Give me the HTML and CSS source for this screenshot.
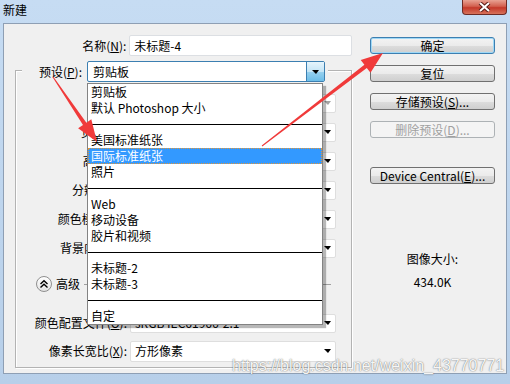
FILE: index.html
```html
<!DOCTYPE html>
<html lang="zh-CN">
<head>
    <meta charset="UTF-8">
    <title>新建</title>
    <link rel="stylesheet" href="styles.css">
</head>
<body>
<div class="win">
    <div class="titlebar">
        <span class="title">新建</span>
        <span class="close">
            <svg width="13" height="10" viewBox="0 0 13 10">
                <path d="M2 1 L11 9 M11 1 L2 9" stroke="#5a1c17" stroke-width="4"/>
                <path d="M2 1 L11 9 M11 1 L2 9" stroke="#fff" stroke-width="2"/>
            </svg>
        </span>
    </div>

    <div class="client">
        <!-- 左侧：表单 -->
        <div class="left">
            <div class="name-row">
                <span class="lbl name-lbl">名称(<u>N</u>):</span>
                <span class="text-box">未标题-4</span>
            </div>

            <div class="group">
                <div class="preset-row">
                    <span class="preset-lbl">预设(<u>P</u>):</span>
                    <div class="combo">
                        <span class="combo-val">剪贴板</span>
                        <span class="drop-btn"><i class="tri"></i></span>

                        <ul class="menu">
                            <li>剪贴板</li>
                            <li>默认 Photoshop 大小</li>
                            <li class="sep"></li>
                            <li>美国标准纸张</li>
                            <li class="hot">国际标准纸张</li>
                            <li>照片</li>
                            <li class="sep"></li>
                            <li>Web</li>
                            <li>移动设备</li>
                            <li>胶片和视频</li>
                            <li class="sep"></li>
                            <li>未标题-2</li>
                            <li>未标题-3</li>
                            <li class="sep"></li>
                            <li>自定</li>
                        </ul>
                    </div>
                </div>

                <div class="field-row first">
                    <span class="lbl off">大小(<u>I</u>):</span>
                    <span class="sel off full"><span>A4</span><i class="tri"></i></span>
                </div>
                <div class="field-row">
                    <span class="lbl">宽度(<u>W</u>):</span>
                    <span class="inp">210</span>
                    <span class="sel unit"><span>毫米</span><i class="tri"></i></span>
                </div>
                <div class="field-row">
                    <span class="lbl">高度(<u>H</u>):</span>
                    <span class="inp">297</span>
                    <span class="sel unit"><span>毫米</span><i class="tri"></i></span>
                </div>
                <div class="field-row">
                    <span class="lbl">分辨率(<u>R</u>):</span>
                    <span class="inp">300</span>
                    <span class="sel unit"><span>像素/英寸</span><i class="tri"></i></span>
                </div>
                <div class="field-row">
                    <span class="lbl">颜色模式(<u>M</u>):</span>
                    <span class="sel mode"><span>RGB 颜色</span><i class="tri"></i></span>
                    <span class="sel unit"><span>8 位</span><i class="tri"></i></span>
                </div>
                <div class="field-row">
                    <span class="lbl">背景内容(<u>C</u>):</span>
                    <span class="sel full"><span>白色</span><i class="tri"></i></span>
                </div>

                <div class="adv-row">
                    <span class="adv-btn">
                        <svg width="10" height="10" viewBox="0 0 10 10">
                            <path d="M1.5 5 L5 1.8 L8.5 5 M1.5 8.5 L5 5.3 L8.5 8.5" fill="none" stroke="#000" stroke-width="1.4"/>
                        </svg>
                    </span>
                    <span class="adv-text">高级</span>
                    <span class="adv-line"></span>
                </div>

                <div class="field-row profile">
                    <span class="lbl">颜色配置文件(<u>O</u>):</span>
                    <span class="sel full"><span>sRGB IEC61966-2.1</span><i class="tri"></i></span>
                </div>
                <div class="field-row aspect">
                    <span class="lbl">像素长宽比(<u>X</u>):</span>
                    <span class="sel full tall"><span>方形像素</span><i class="tri"></i></span>
                </div>
            </div>
        </div>

        <!-- 右侧：按钮 -->
        <div class="right">
            <span class="btn default">确定</span>
            <span class="btn">复位</span>
            <span class="btn">存储预设(<u>S</u>)...</span>
            <span class="btn off">删除预设(<u>D</u>)...</span>
            <span class="btn device">Device Central(<u>E</u>)...</span>

            <div class="size-info">
                <p>图像大小:</p>
                <p class="size-num">434.0K</p>
            </div>
        </div>
    </div>

    <svg class="arrows" width="510" height="384" viewBox="0 0 510 384">
        <polygon fill="#f03a3a" points="53.4,76.7 86.4,122.7 91.3,119.3 97,142 78.1,128.3 83.0,124.9 52.6,77.3"/>
        <polygon fill="#f03a3a" points="262.3,146.4 366.8,68.0 370.5,72.7 383,53 360.7,60.1 364.4,64.8 261.7,145.6"/>
    </svg>

    <div class="watermark">https://blog.csdn.net/weixin_43770771</div>
</div>
</body>
</html>
```

FILE: styles.css
```css
* {
    margin: 0;
    padding: 0;
    box-sizing: border-box;
}

body {
    width: 510px;
    height: 384px;
    overflow: hidden;
    font: 12px/16px "Noto Sans CJK SC", "Liberation Sans", sans-serif;
    color: #000;
    background: #bcd3eb;
}

u {
    text-decoration: underline;
}

ul {
    list-style: none;
}

.win {
    position: relative;
    width: 510px;
    height: 384px;
    display: flex;
    flex-direction: column;
    background: linear-gradient(#c6dcf3, #b7cfe9);
}

/* 标题栏 */
.titlebar {
    height: 23px;
    display: flex;
    justify-content: space-between;
    align-items: flex-start;
    padding-left: 3px;
}

.title {
    line-height: 20px;
}

.close {
    width: 45px;
    height: 15px;
    margin-right: 3px;
    display: flex;
    align-items: center;
    justify-content: center;
    border: 1px solid #6d2b25;
    border-top: 0;
    border-radius: 0 0 4px 4px;
    background: linear-gradient(#e8a293, #d2604f 45%, #c4382a 55%, #d7735b);
}

/* 客户区 */
.client {
    height: 351px;
    margin: 0 3px;
    display: flex;
    border: 1px solid #8e9fb4;
    background: #f0f0f0;
}

.left {
    width: 348px;
}

.lbl {
    width: 111px;
    margin-right: 3px;
    text-align: right;
    white-space: nowrap;
}

.off {
    color: #8d8d8d;
}

.name-row {
    display: flex;
    align-items: center;
    height: 21px;
    margin-top: 11px;
}

.name-lbl {
    width: 123px;
}

.text-box {
    width: 224px;
    height: 21px;
    padding-left: 4px;
    line-height: 19px;
    border: 1px solid #dcdfe3;
    border-radius: 2px;
    background: #fff;
}

/* 分组框 */
.group {
    width: 337px;
    height: 298px;
    margin: 14px 0 0 11px;
    border: 1px solid #b3b3b3;
    box-shadow: 1px 1px 0 #fff, inset 1px 1px 0 #fff;
}

.preset-row {
    display: flex;
    align-items: center;
    width: 306px;
    height: 21px;
    margin: -10px 0 0 6px;
    background: #f0f0f0;
}

.preset-lbl {
    width: 60px;
    margin-right: 5px;
    text-align: right;
}

.combo {
    position: relative;
    display: flex;
    align-items: center;
    width: 238px;
    height: 21px;
    padding-left: 5px;
    border: 1px solid #3c7fb1;
    border-radius: 2px;
    background: #fff;
}

.combo-val {
    flex: 1;
}

.drop-btn {
    width: 18px;
    height: 19px;
    display: flex;
    align-items: center;
    justify-content: center;
    border-left: 1px solid #3c7fb1;
    background: linear-gradient(#e5f4fc, #c4e5f6 50%, #98d1ef 51%, #6cbde8);
}

.tri {
    width: 0;
    height: 0;
    border-left: 4px solid transparent;
    border-right: 3px solid transparent;
    border-top: 4px solid #000;
}

.off .tri {
    border-top-color: #a3a3a3;
}

/* 下拉列表 */
.menu {
    position: absolute;
    left: -1px;
    top: 21px;
    z-index: 5;
    width: 236px;
    border: 1px solid #838383;
    background: #fff;
    box-shadow: 3px 3px 1px rgba(0, 0, 0, 0.28);
}

.menu li {
    height: 16px;
    padding-left: 3px;
    line-height: 16px;
    white-space: nowrap;
}

.menu .hot {
    color: #fff;
    background: #3399ff;
    outline: 1px dotted #e0963a;
    outline-offset: -1px;
}

.menu .sep {
    background: linear-gradient(#000, #000) 0 8px / 100% 1px no-repeat;
}

/* 表单行 */
.field-row {
    display: flex;
    align-items: center;
    height: 20px;
    margin-top: 9px;
}

.field-row.first {
    margin-top: 11px;
}

.field-row.profile {
    margin-top: 21px;
}

.field-row.aspect {
    margin-top: 8px;
}

.inp {
    width: 116px;
    height: 19px;
    margin-right: 4px;
    padding-left: 4px;
    line-height: 17px;
    border: 1px solid #dcdfe3;
    background: #fff;
}

.sel {
    display: flex;
    align-items: center;
    justify-content: space-between;
    height: 19px;
    padding: 0 4px;
    border: 1px solid #dedede;
    border-radius: 2px;
    background: #fff;
    white-space: nowrap;
}

.sel.full {
    width: 206px;
}

.sel.tall {
    height: 21px;
}

.sel.unit {
    width: 86px;
}

.sel.mode {
    width: 116px;
    margin-right: 4px;
}

.adv-row {
    display: flex;
    align-items: center;
    height: 16px;
    margin-top: 18px;
    padding-left: 20px;
}

.adv-btn {
    width: 16px;
    height: 16px;
    display: flex;
    align-items: center;
    justify-content: center;
    border: 1px solid #8f8f8f;
    border-radius: 50%;
    background: linear-gradient(#ffffff, #e4e4e4);
}

.adv-text {
    margin-left: 4px;
}

.adv-line {
    flex: 1;
    height: 1px;
    margin: 0 20px 0 4px;
    background: #a0a0a0;
}

/* 右侧按钮 */
.right {
    flex: 1;
    display: flex;
    flex-direction: column;
    padding-left: 18px;
}

.btn {
    width: 125px;
    height: 17px;
    margin-top: 11px;
    line-height: 15px;
    text-align: center;
    border: 1px solid #707070;
    border-radius: 3px;
    background: linear-gradient(#f3f3f3, #ebebeb 50%, #dddddd 51%, #cfcfcf);
}

.btn.default {
    margin-top: 13px;
    border-color: #3c7fb1;
    box-shadow: inset 0 0 0 1px #9fd8f6;
}

.btn.off {
    color: #a0a0a0;
    border-color: #adb2b5;
    background: #f4f4f4;
}

.btn.device {
    margin-top: 29px;
}

.size-info {
    width: 125px;
    margin-top: 67px;
    text-align: center;
}

.size-num {
    margin-top: 7px;
}

/* 覆盖层 */
.arrows {
    position: absolute;
    left: 0;
    top: 0;
    z-index: 10;
    pointer-events: none;
}

.watermark {
    position: absolute;
    left: 232px;
    top: 358px;
    z-index: 11;
    font: 16px/16px "Liberation Sans", sans-serif;
    color: rgba(255, 255, 255, 0.95);
    text-shadow: 0 0 1px rgba(0, 0, 0, 0.5), 0 0 2px rgba(0, 0, 0, 0.25);
    white-space: nowrap;
}
```
